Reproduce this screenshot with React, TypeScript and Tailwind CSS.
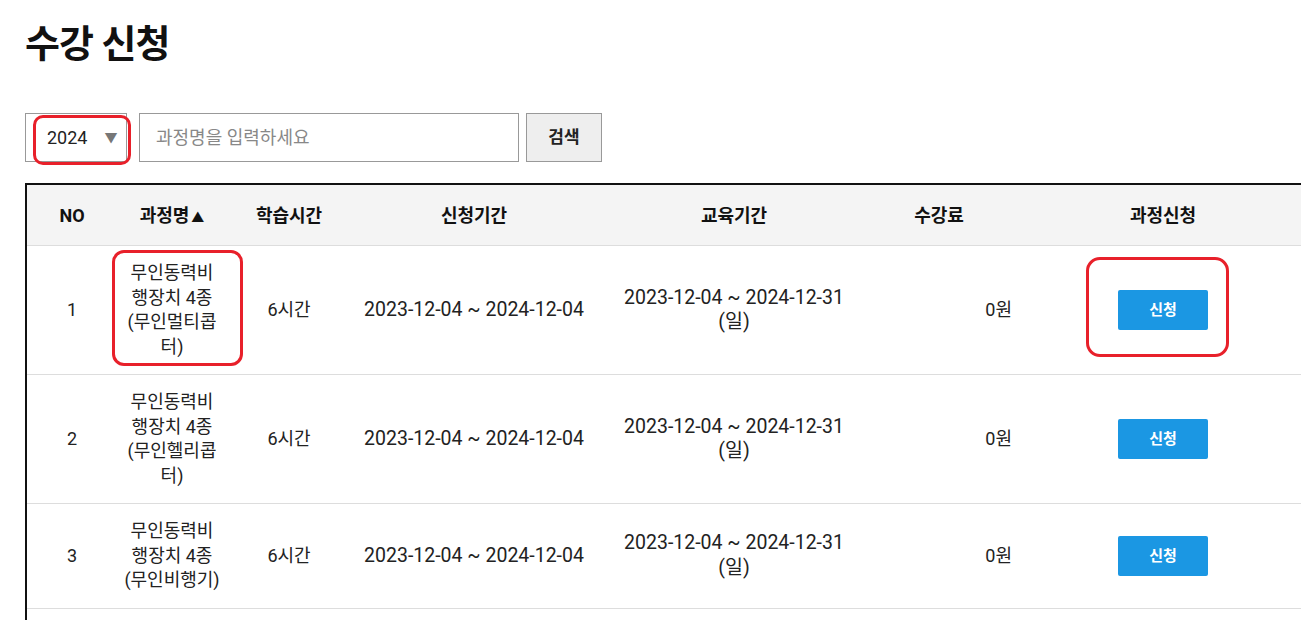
import React from 'react';

type Course = {
  no: number;
  name: string;
  hours: string;
  applyPeriod: string;
  eduPeriod: string;
  fee: string;
};

const courses: Course[] = [
  {
    no: 1,
    name: '무인동력비행장치 4종 (무인멀티콥터)',
    hours: '6시간',
    applyPeriod: '2023-12-04 ~ 2024-12-04',
    eduPeriod: '2023-12-04 ~ 2024-12-31 (일)',
    fee: '0원',
  },
  {
    no: 2,
    name: '무인동력비행장치 4종 (무인헬리콥터)',
    hours: '6시간',
    applyPeriod: '2023-12-04 ~ 2024-12-04',
    eduPeriod: '2023-12-04 ~ 2024-12-31 (일)',
    fee: '0원',
  },
  {
    no: 3,
    name: '무인동력비행장치 4종 (무인비행기)',
    hours: '6시간',
    applyPeriod: '2023-12-04 ~ 2024-12-04',
    eduPeriod: '2023-12-04 ~ 2024-12-31 (일)',
    fee: '0원',
  },
];

const font = {
  fontFamily: 'Roboto, "Noto Sans CJK KR", sans-serif',
};

export default function App() {
  return (
    <div
      className="flex h-screen w-full flex-col overflow-hidden bg-white pl-[25px] pt-[16px] text-[#222]"
      style={font}
    >
      {/* 제목 */}
      <h1 className="text-[38px] font-bold leading-[56px] tracking-tight text-[#111]">
        수강 신청
      </h1>

      {/* 검색 영역 */}
      <div className="mt-[41px] flex h-[49px] items-stretch">
        <div className="relative flex w-[102px] items-center border border-[#999] pl-[21px]">
          <span className="text-[18px] text-[#222]">2024</span>
          <span className="ml-[17px] text-[13px] text-[#777]">▼</span>
          {/* 빨간 표시 */}
          <div className="pointer-events-none absolute left-[7px] top-[1px] h-[50px] w-[98px] rounded-[10px] border-[3px] border-[#e8202a]" />
        </div>
        <div className="ml-[12px] flex w-[380px] items-center border border-[#999] pl-[16px]">
          <span className="text-[18px] text-[#888]">과정명을 입력하세요</span>
        </div>
        <button
          type="button"
          className="ml-[7px] w-[76px] border border-[#999] bg-[#eeeeee] text-[17px] font-bold text-[#222]"
        >
          검색
        </button>
      </div>

      {/* 목록 */}
      <div className="mt-[21px] w-[1320px] flex-1 border-l-2 border-t-2 border-[#111]">
        <div className="flex h-[61px] items-center border-b border-[#dddddd] bg-[#f4f4f4] text-[18px] font-bold text-[#111]">
          <div className="w-[90px] text-center">NO</div>
          <div className="w-[110px] text-center">
            과정명<span className="ml-[2px] text-[13px]">▲</span>
          </div>
          <div className="w-[124px] text-center">학습시간</div>
          <div className="w-[246px] text-center">신청기간</div>
          <div className="w-[274px] text-center">교육기간</div>
          <div className="w-[192px] pr-[56px] text-center">수강료</div>
          <div className="w-[200px] text-center">과정신청</div>
        </div>

        {courses.map((c) => (
          <div
            key={c.no}
            className="flex items-center border-b border-[#dddddd] py-[15px] text-[18px] leading-[24.5px] text-[#222]"
          >
            <div className="w-[90px] text-center">{c.no}</div>
            <div className="relative w-[110px] px-[6px] text-center">
              {c.name}
              {c.no === 1 ? (
                <div className="pointer-events-none absolute -bottom-[7px] left-[-5px] -top-[11px] w-[131px] rounded-[12px] border-[3px] border-[#e8202a]" />
              ) : null}
            </div>
            <div className="w-[124px] text-center">{c.hours}</div>
            <div className="w-[246px] text-center text-[19.5px]">{c.applyPeriod}</div>
            <div className="w-[274px] px-[17px] text-center text-[19.5px]">
              {c.eduPeriod}
            </div>
            <div className="w-[192px] pr-[51px] text-right">{c.fee}</div>
            <div className="flex w-[200px] justify-center">
              <div className="relative">
                <button
                  type="button"
                  className="h-[40px] w-[90px] rounded-[2px] bg-[#1b97e3] text-[15px] font-bold text-white"
                >
                  신청
                </button>
                {c.no === 1 ? (
                  <div className="pointer-events-none absolute -left-[32px] -top-[33px] h-[100px] w-[143px] rounded-[14px] border-[3px] border-[#e8202a]" />
                ) : null}
              </div>
            </div>
          </div>
        ))}
      </div>
    </div>
  );
}
